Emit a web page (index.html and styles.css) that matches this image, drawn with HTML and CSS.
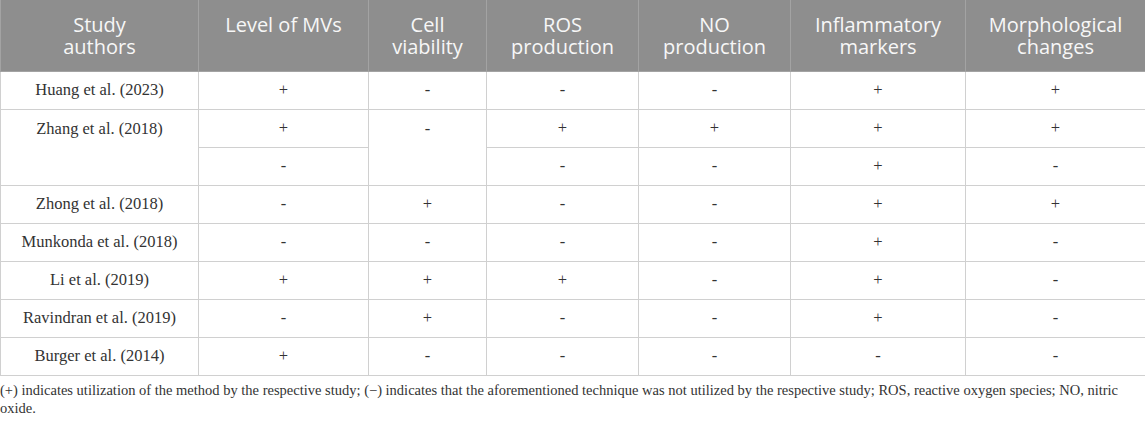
FILE: index.html
```html
<!DOCTYPE html>
<html>
<head>
<meta charset="utf-8">
<link rel="stylesheet" href="styles.css">
</head>
<body>
<table class="data">
  <colgroup>
    <col class="c1"><col class="c2"><col class="c3"><col class="c4"><col class="c5"><col class="c6"><col class="c7">
  </colgroup>
  <thead>
    <tr>
      <th>Study<br>authors</th>
      <th>Level of MVs</th>
      <th>Cell<br>viability</th>
      <th>ROS<br>production</th>
      <th>NO<br>production</th>
      <th>Inflammatory<br>markers</th>
      <th>Morphological<br>changes</th>
    </tr>
  </thead>
  <tbody>
    <tr><td>Huang et al. (2023)</td><td>+</td><td>-</td><td>-</td><td>-</td><td>+</td><td>+</td></tr>
    <tr><td rowspan="2" class="top">Zhang et al. (2018)</td><td>+</td><td rowspan="2" class="top">-</td><td>+</td><td>+</td><td>+</td><td>+</td></tr>
    <tr><td>-</td><td>-</td><td>-</td><td>+</td><td>-</td></tr>
    <tr><td>Zhong et al. (2018)</td><td>-</td><td>+</td><td>-</td><td>-</td><td>+</td><td>+</td></tr>
    <tr><td>Munkonda et al. (2018)</td><td>-</td><td>-</td><td>-</td><td>-</td><td>+</td><td>-</td></tr>
    <tr><td>Li et al. (2019)</td><td>+</td><td>+</td><td>+</td><td>-</td><td>+</td><td>-</td></tr>
    <tr><td>Ravindran et al. (2019)</td><td>-</td><td>+</td><td>-</td><td>-</td><td>+</td><td>-</td></tr>
    <tr><td>Burger et al. (2014)</td><td>+</td><td>-</td><td>-</td><td>-</td><td>-</td><td>-</td></tr>
  </tbody>
</table>
<p class="note">(+) indicates utilization of the method by the respective study; (−) indicates that the aforementioned technique was not utilized by the respective study; ROS, reactive oxygen species; NO, nitric oxide.</p>
</body>
</html>
```

FILE: styles.css
```css
html, body {
  margin: 0;
  padding: 0;
  background: #ffffff;
}

.data {
  width: 1145px;
  border-collapse: collapse;
  table-layout: fixed;
  font-family: "Liberation Serif", "Times New Roman", serif;
  color: #333333;
}

.c1 { width: 198px; }
.c2 { width: 170px; }
.c3 { width: 118px; }
.c4 { width: 152px; }
.c5 { width: 152px; }
.c6 { width: 175px; }
.c7 { width: 180px; }

.data th {
  background: #8e8e8e;
  color: #f7f7f7;
  font-family: "Open Sans", "Liberation Sans", sans-serif;
  font-weight: 400;
  font-size: 20px;
  line-height: 22px;
  height: 71px;
  box-sizing: border-box;
  padding: 14px 2px 0;
  vertical-align: top;
  text-align: center;
  border: 1px solid #a3a3a3;
  border-top: none;
}

.data td {
  height: 38px;
  box-sizing: border-box;
  padding: 0 4px;
  text-align: center;
  vertical-align: middle;
  font-size: 16.5px;
  line-height: 20px;
  border: 1px solid #d0d0d0;
}

.data td.top {
  vertical-align: top;
  padding-top: 9px;
}

.note {
  margin: 5px 0 0;
  font-family: "Liberation Serif", "Times New Roman", serif;
  font-size: 14.5px;
  line-height: 18px;
  color: #333333;
}
```
